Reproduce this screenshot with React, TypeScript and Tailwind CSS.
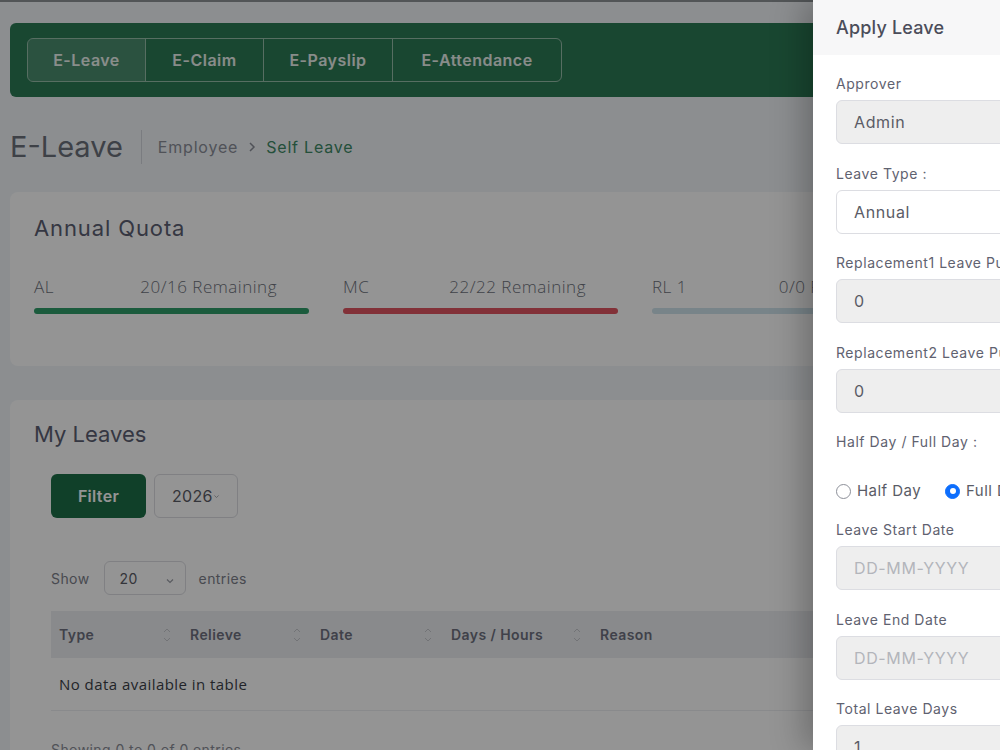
import React from "react";

const tabs = [
  { name: "E-Leave", w: "w-[117px]", active: true },
  { name: "E-Claim", w: "w-[118px]" },
  { name: "E-Payslip", w: "w-[129px]" },
  { name: "E-Attendance", w: "w-[169px]" },
];

const quotas = [
  { code: "AL", text: "20/16 Remaining", bar: "bg-[#2f9e6a]" },
  { code: "MC", text: "22/22 Remaining", bar: "bg-[#e05561]" },
  { code: "RL 1", text: "0/0 Remaining", bar: "bg-[#cfe3ec]" },
];

const columns = [
  { name: "Type", w: "w-[131px]" },
  { name: "Relieve", w: "w-[130px]" },
  { name: "Date", w: "w-[131px]" },
  { name: "Days / Hours", w: "w-[149px]" },
];

const SortIcon: React.FC = () => (
  <svg width="8" height="16" viewBox="0 0 8 16" fill="none" stroke="#c4c6cc" strokeWidth="1">
    <path d="M1 5l3-3 3 3" />
    <path d="M1 11l3 3 3-3" />
  </svg>
);

const Chevron: React.FC<{ size?: number }> = ({ size = 10 }) => (
  <svg width={size} height={size} viewBox="0 0 10 10" fill="none" stroke="#9a9ea6" strokeWidth="1.2">
    <path d="M2 3.5l3 3 3-3" />
  </svg>
);

const Field: React.FC<{ label: string; value: string; white?: boolean; placeholder?: boolean }> = ({
  label,
  value,
  white,
  placeholder,
}) => (
  <div className="mb-[19.5px]">
    <div className="h-[20px] leading-[20px] text-[14px] text-[#5f6270] whitespace-nowrap tracking-[0.04em]">
      {label}
    </div>
    <div
      className={`mt-[6px] h-[44px] rounded-md border border-[#dcdde2] flex items-center px-[17px] text-[16px] tracking-[0.04em] ${
        white ? "bg-white" : "bg-[#eeeeee]"
      } ${placeholder ? "text-[#b3b5bb]" : "text-[#5a5c66]"}`}
    >
      {value}
    </div>
  </div>
);

export default function App() {
  return (
    <div className="relative min-h-screen h-[750px] overflow-hidden bg-[#f1f5f9] font-['Inter',sans-serif]">
      <div className="h-[2px] bg-[#8d9396]"></div>

      {/* Page */}
      <div className="px-[10px] pt-[21px]">
        {/* Top nav */}
        <div className="h-[74px] rounded-md bg-[#2c7a55] flex items-center px-[17px]">
          <div className="flex h-[44px] rounded-md border border-white/50 overflow-hidden">
            {tabs.map((t, i) => (
              <div
                key={t.name}
                className={`${t.w} flex items-center justify-center text-[16px] font-semibold text-white/90 tracking-[0.03em] ${
                  i > 0 ? "border-l border-white/50" : ""
                } ${t.active ? "bg-white/15" : ""}`}
              >
                {t.name}
              </div>
            ))}
          </div>
        </div>

        {/* Title + breadcrumb */}
        <div className="mt-[33px] flex items-center h-[34px]">
          <div className="text-[29px] leading-[34px] text-[#6c717b]">E-Leave</div>
          <div className="ml-[18px] w-px h-[34px] bg-[#d3d6dc]"></div>
          <div className="ml-[16px] flex items-center text-[16px] text-[#8a8e98] tracking-[0.05em]">
            <span>Employee</span>
            <svg className="mx-[10px]" width="8" height="10" viewBox="0 0 8 10" fill="none" stroke="#8a8e98" strokeWidth="1.5">
              <path d="M2 1l4 4-4 4" />
            </svg>
            <span className="text-[#3e8a66]">Self Leave</span>
          </div>
        </div>

        {/* Annual Quota */}
        <div className="mt-[28px] rounded-lg bg-white px-[24px] pt-[21px] pb-[52px]">
          <div className="text-[22px] leading-[30px] text-[#5c6073] tracking-[0.04em]">Annual Quota</div>
          <div className="mt-[32px] flex gap-[34px] font-['Open_Sans',sans-serif]">
            {quotas.map((q) => (
              <div key={q.code} className="w-[275px]">
                <div className="flex justify-between pr-[32px] text-[17px] leading-[24px] font-light text-[#6e727c] tracking-[0.03em]">
                  <span>{q.code}</span>
                  <span>{q.text}</span>
                </div>
                <div className={`mt-[9px] h-[6px] rounded-full ${q.bar}`}></div>
              </div>
            ))}
          </div>
        </div>

        {/* My Leaves */}
        <div className="mt-[34px] rounded-lg bg-white px-[24px] pt-[20px] pb-[40px]">
          <div className="text-[22px] leading-[28px] text-[#5c6073]">My Leaves</div>
          <div className="px-[17px]">
            <div className="mt-[26px] flex gap-[8px]">
              <div className="h-[44px] w-[95px] rounded-md bg-[#1d6e47] text-white font-semibold text-[16px] flex items-center justify-center tracking-[0.02em]">
                Filter
              </div>
              <div className="h-[44px] w-[84px] rounded-md border border-[#dcdde2] flex items-center pl-[17px] text-[16px] text-[#5a5c66] tracking-[0.02em]">
                2026
                <Chevron size={7} />
              </div>
            </div>

            <div className="mt-[43px] flex items-center text-[14px] text-[#7c808a] tracking-[0.03em]">
              <span>Show</span>
              <div className="ml-[14px] h-[34px] w-[82px] rounded-md border border-[#dcdde2] flex items-center justify-between pl-[15px] pr-[10px] text-[#5a5c66]">
                <span>20</span>
                <span className="mt-[6px]">
                  <Chevron />
                </span>
              </div>
              <span className="ml-[13px]">entries</span>
            </div>

            <div className="mt-[16px]">
              <div className="h-[47px] bg-[#eceef1] flex items-center text-[14px] font-semibold text-[#6e7180] tracking-[0.03em]">
                {columns.map((c) => (
                  <div key={c.name} className={`${c.w} flex items-center justify-between pl-[8px] pr-[11px]`}>
                    <span>{c.name}</span>
                    <SortIcon />
                  </div>
                ))}
                <div className="pl-[8px]">Reason</div>
              </div>
              <div className="h-[53px] border-b border-[#eceef1] flex items-center pl-[8px] text-[15px] text-[#3c3f48] tracking-[0.03em] font-['Open_Sans',sans-serif]">
                No data available in table
              </div>
            </div>

            <div className="mt-[28px] text-[14px] text-[#8a8e98] tracking-[0.03em]">Showing 0 to 0 of 0 entries</div>
          </div>
        </div>
      </div>

      {/* Backdrop */}
      <div className="absolute inset-0 bg-black/[0.42]"></div>

      {/* Offcanvas panel */}
      <div className="absolute top-0 left-[813px] w-[420px] h-full bg-white shadow-[-10px_0_30px_rgba(0,0,0,0.25)]">
        <div className="h-[55px] bg-[#f7f7f8] flex items-center px-[23px] text-[18px] font-medium text-[#4b4d5a] tracking-[0.01em]">
          Apply Leave
        </div>
        <div className="px-[23px] pt-[19px]">
          <Field label="Approver" value="Admin" />
          <Field label="Leave Type :" value="Annual" white />
          <Field label="Replacement1 Leave Public Holiday" value="0" />
          <Field label="Replacement2 Leave Public Holiday" value="0" />

          <div className="h-[20px] leading-[20px] text-[14px] text-[#5f6270] tracking-[0.04em]">Half Day / Full Day :</div>
          <div className="mt-[29px] h-[20px] flex items-center text-[15px] text-[#5a5c66] tracking-[0.03em]">
            <span className="w-[15px] h-[15px] rounded-full border border-[#8d9099] bg-white"></span>
            <span className="ml-[6px]">Half Day</span>
            <span className="ml-[24px] w-[15px] h-[15px] rounded-full border border-[#0d6efd] bg-[#0d6efd] flex items-center justify-center">
              <span className="w-[6px] h-[6px] rounded-full bg-white"></span>
            </span>
            <span className="ml-[6px]">Full Day</span>
          </div>

          <div className="mt-[19px]">
            <Field label="Leave Start Date" value="DD-MM-YYYY" placeholder />
            <Field label="Leave End Date" value="DD-MM-YYYY" placeholder />
            <Field label="Total Leave Days" value="1" />
          </div>
        </div>
      </div>
    </div>
  );
}
